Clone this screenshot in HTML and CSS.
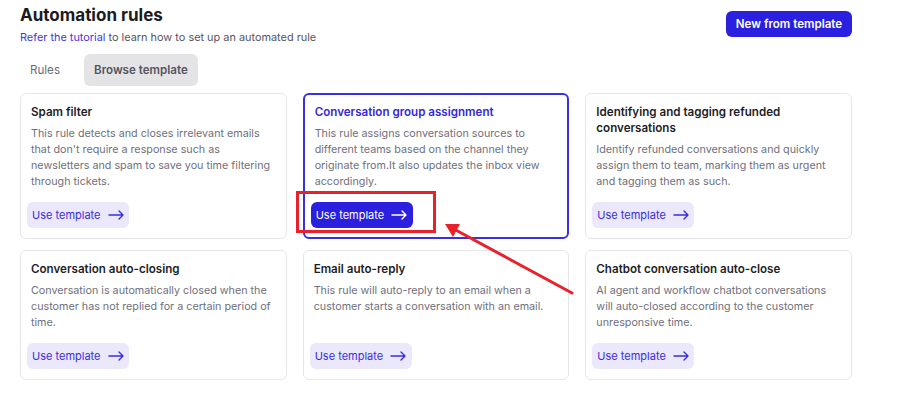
FILE: index.html
```html
<!DOCTYPE html>
<html>
<head>
<meta charset="utf-8">
<link rel="stylesheet" href="styles.css">
</head>
<body>
<div class="page">
  <header class="header">
    <div class="heading">
      <h1 class="title">Automation rules</h1>
      <p class="subtitle"><a class="link">Refer the tutorial</a> to learn how to set up an automated rule</p>
    </div>
    <button class="primary">New from template</button>
  </header>
  <nav class="tabs">
    <span class="tab">Rules</span>
    <span class="tab tab-active">Browse template</span>
  </nav>
  <section class="grid">
    <div class="card">
      <h2 class="card-title">Spam filter</h2>
      <p class="card-desc">This rule detects and closes irrelevant emails that don't require a response such as newsletters and spam to save you time filtering through tickets.</p>
      <button class="use">Use template <span class="arrow"><svg width="16" height="10" viewBox="0 0 16 10"><path d="M1 5H15M11 1L15 5L11 9" fill="none" stroke="currentColor" stroke-width="1.4" stroke-linecap="round" stroke-linejoin="round"/></svg></span></button>
    </div>
    <div class="card card-active">
      <h2 class="card-title">Conversation group assignment</h2>
      <p class="card-desc">This rule assigns conversation sources to different teams based on the channel they originate from.It also updates the inbox view accordingly.</p>
      <button class="use use-solid">Use template <span class="arrow"><svg width="16" height="10" viewBox="0 0 16 10"><path d="M1 5H15M11 1L15 5L11 9" fill="none" stroke="currentColor" stroke-width="1.4" stroke-linecap="round" stroke-linejoin="round"/></svg></span></button>
    </div>
    <div class="card">
      <h2 class="card-title">Identifying and tagging refunded conversations</h2>
      <p class="card-desc">Identify refunded conversations and quickly assign them to team, marking them as urgent and tagging them as such.</p>
      <button class="use">Use template <span class="arrow"><svg width="16" height="10" viewBox="0 0 16 10"><path d="M1 5H15M11 1L15 5L11 9" fill="none" stroke="currentColor" stroke-width="1.4" stroke-linecap="round" stroke-linejoin="round"/></svg></span></button>
    </div>
    <div class="card">
      <h2 class="card-title">Conversation auto-closing</h2>
      <p class="card-desc">Conversation is automatically closed when the customer has not replied for a certain period of time.</p>
      <button class="use">Use template <span class="arrow"><svg width="16" height="10" viewBox="0 0 16 10"><path d="M1 5H15M11 1L15 5L11 9" fill="none" stroke="currentColor" stroke-width="1.4" stroke-linecap="round" stroke-linejoin="round"/></svg></span></button>
    </div>
    <div class="card">
      <h2 class="card-title">Email auto-reply</h2>
      <p class="card-desc">This rule will auto-reply to an email when a customer starts a conversation with an email.</p>
      <button class="use">Use template <span class="arrow"><svg width="16" height="10" viewBox="0 0 16 10"><path d="M1 5H15M11 1L15 5L11 9" fill="none" stroke="currentColor" stroke-width="1.4" stroke-linecap="round" stroke-linejoin="round"/></svg></span></button>
    </div>
    <div class="card">
      <h2 class="card-title">Chatbot conversation auto-close</h2>
      <p class="card-desc">AI agent and workflow chatbot conversations will auto-closed according to the customer unresponsive time.</p>
      <button class="use">Use template <span class="arrow"><svg width="16" height="10" viewBox="0 0 16 10"><path d="M1 5H15M11 1L15 5L11 9" fill="none" stroke="currentColor" stroke-width="1.4" stroke-linecap="round" stroke-linejoin="round"/></svg></span></button>
    </div>
  </section>
</div>
<div class="mark-box"></div>
<svg class="mark-arrow" width="908" height="401" viewBox="0 0 908 401">
  <line x1="572" y1="293" x2="452" y2="228" stroke="#e8212b" stroke-width="3" stroke-linecap="round"/>
  <polygon points="445,224 460,224 453,237" fill="#e8212b"/>
</svg>
</body>
</html>
```
FILE: styles.css
```css
* { box-sizing: border-box; }
html, body { margin: 0; padding: 0; background: #ffffff; }
body {
  font-family: Inter, "Noto Sans", sans-serif;
  color: #1d1d26;
  width: 908px;
  height: 401px;
  overflow: hidden;
  position: relative;
}
.page { padding: 4px 0 0 20px; width: 852px; }
.header { display: flex; justify-content: space-between; align-items: flex-start; }
.title { margin: 0; font-size: 17px; line-height: 22px; font-weight: 700; color: #1b1b22; }
.subtitle { margin: 3px 0 0; font-size: 10.9px; line-height: 16px; color: #55555f; }
.link { color: #4636e2; }
.primary {
  margin-top: 7px;
  height: 26px;
  width: 126px;
  border: none;
  border-radius: 6px;
  background: #2b1fe0;
  color: #ffffff;
  font-family: Inter, sans-serif;
  font-size: 11.6px;
  font-weight: 600;
  padding: 0;
}
.tabs { display: flex; gap: 14px; margin-top: 9px; height: 32px; }
.tab { display: flex; align-items: center; padding: 0 10px; font-size: 11.6px; color: #6b6b76; border-radius: 6px; }
.tab-active { background: #e4e4e7; color: #55555f; font-weight: 600; }
.grid {
  margin-top: 7px;
  display: grid;
  grid-template-columns: repeat(3, 1fr);
  column-gap: 16px;
  row-gap: 11px;
  width: 832px;
}
.card {
  border: 1px solid #e7e7ea;
  border-radius: 6px;
  padding: 10px;
  display: flex;
  flex-direction: column;
  align-items: flex-start;
  background: #ffffff;
}
.card-active { border: 2px solid #3a30e2; padding: 9px 9px 9px 10px; }
.card-title { margin: 0; font-size: 11.6px; line-height: 16px; font-weight: 600; color: #1d1d26; }
.card-active .card-title { color: #3527dc; }
.card-desc { margin: 6px 0 12px; font-size: 10.75px; line-height: 16px; color: #6f6f7c; }
.use {
  margin-top: auto;
  margin-left: -4px;
  height: 26px;
  width: 102px;
  border: none;
  border-radius: 6px;
  background: #ebe8fc;
  color: #3a2ddf;
  font-family: Inter, sans-serif;
  font-size: 11px;
  white-space: nowrap;
  display: flex;
  align-items: center;
  padding: 0 0 0 5px;
  gap: 7px;
}
.use-solid { background: #2b1fe0; color: #ffffff; }
.arrow { display: flex; align-items: center; }
.mark-box {
  position: absolute;
  left: 296px;
  top: 191px;
  width: 140px;
  height: 42px;
  border: 3px solid #e8212b;
}
.mark-arrow { position: absolute; left: 0; top: 0; pointer-events: none; }
```
